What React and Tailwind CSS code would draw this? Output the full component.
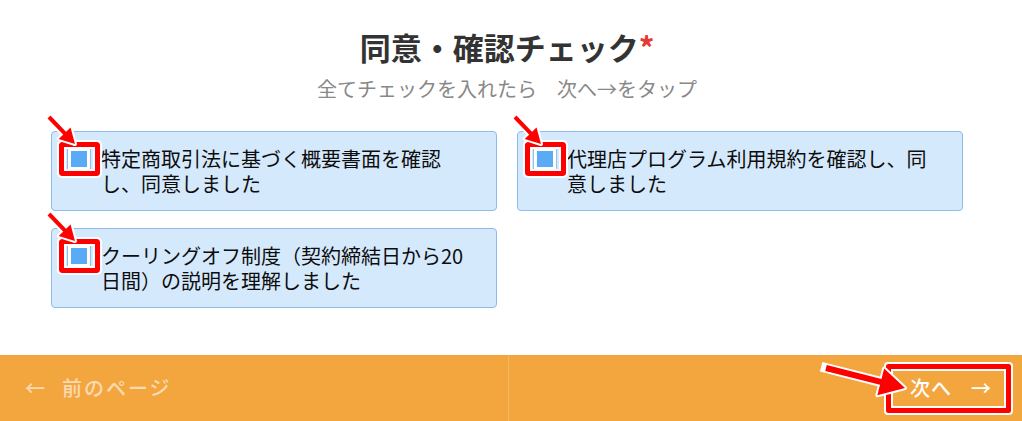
// Agreement / confirmation checklist step with annotated highlights.
const ITEMS = [
  "特定商取引法に基づく概要書面を確認し、同意しました",
  "代理店プログラム利用規約を確認し、同意しました",
  "クーリングオフ制度（契約締結日から20日間）の説明を理解しました",
];

const FONT = { fontFamily: '"Noto Sans CJK JP", "Noto Sans", sans-serif' };

function Arrow({ x1, y1, x2, y2, width = 4, head = 15, className }) {
  const len = Math.hypot(x2 - x1, y2 - y1);
  const dx = (x2 - x1) / len;
  const dy = (y2 - y1) / len;
  const bx = x2 - dx * head;
  const by = y2 - dy * head;
  const nx = -dy * head * 0.55;
  const ny = dx * head * 0.55;
  const pts = `${x2},${y2} ${bx + nx},${by + ny} ${bx - nx},${by - ny}`;
  return (
    <svg className={className} overflow="visible">
      <line x1={x1} y1={y1} x2={bx + dx * 2} y2={by + dy * 2} stroke="#fff" strokeWidth={width + 4} strokeLinecap="square" />
      <polygon points={pts} fill="#fff" stroke="#fff" strokeWidth="4" strokeLinejoin="round" />
      <line x1={x1} y1={y1} x2={bx + dx * 2} y2={by + dy * 2} stroke="#ff0000" strokeWidth={width} strokeLinecap="butt" />
      <polygon points={pts} fill="#ff0000" />
    </svg>
  );
}

function Card({ text }) {
  return (
    <label className="flex items-start rounded-[4px] border border-[#8ebde9] bg-[#d5e9fc] py-[14px] pl-[15px] pr-4 text-[20px] leading-[25px] text-[#0d0d0d]">
      <span className="relative mt-[1px] flex h-[24px] w-[24px] shrink-0 items-center justify-center border border-[#8fbfee] bg-white">
        <span className="h-4 w-4 bg-[#5aabf6]" />
        <span className="absolute -bottom-[6px] -left-[9px] -right-[10px] -top-[6px] rounded-[3px] border-[5px] border-[#ff0000] shadow-[inset_0_0_0_2px_#fff] outline-2 outline-white" />
        <Arrow className="absolute -left-[22px] -top-[34px] h-[34px] w-[34px]" x1={3} y1={3} x2={29} y2={30} />
      </span>
      <span className="ml-[10px]">{text}</span>
    </label>
  );
}

export default function App() {
  return (
    <div className="flex h-[421px] w-[1022px] flex-col bg-white" style={FONT}>
      <main className="w-[1014px] flex-1 pt-[24px]">
        <h1 className="text-center text-[31px] font-bold leading-[46px] text-[#333]">
          同意・確認チェック<span className="text-[#e53935]">*</span>
        </h1>
        <p className="mt-[5px] text-center text-[20px] leading-[28px] text-[#888]">全てチェックを入れたら　次へ→をタップ</p>
        <div className="mx-auto mt-[28px] grid w-[912px] grid-cols-2 gap-x-5 gap-y-[17px]">
          {ITEMS.map((t) => (
            <Card key={t} text={t} />
          ))}
        </div>
      </main>
      <footer className="relative flex h-[66px] bg-[#f3a53e] text-[20px]">
        <div className="flex w-[509px] items-center border-r border-white/20 pl-[25px] font-medium tracking-[2px] text-white/60">
          <span>←</span>
          <span className="ml-[15px]">前のページ</span>
        </div>
        <div className="flex flex-1 items-center justify-end pr-[11px]">
          <button type="button" className="relative flex h-[49px] items-center pl-[24px] pr-[19px] font-medium tracking-[1px] text-white">
            <span>次へ</span>
            <span className="ml-[19px]">→</span>
            <span className="absolute inset-0 rounded-[2px] border-[5px] border-[#ff0000] shadow-[inset_0_0_0_2px_#fff] outline-2 outline-white" />
          </button>
        </div>
        <Arrow className="absolute left-0 top-0 h-[66px] w-[1022px]" x1={826} y1={13} x2={905} y2={33} width={6} head={25} />
      </footer>
    </div>
  );
}
